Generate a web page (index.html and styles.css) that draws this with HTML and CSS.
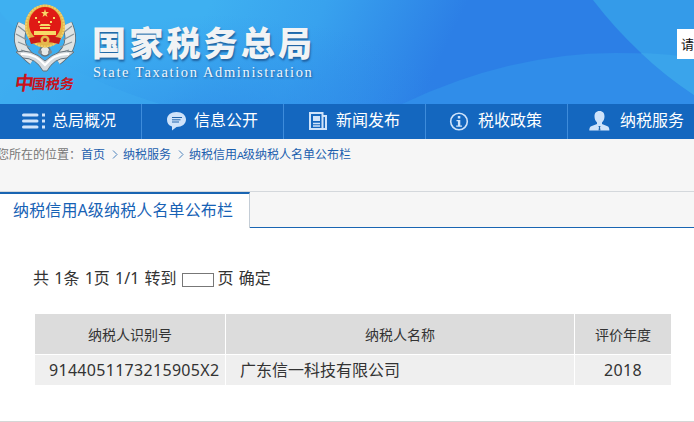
FILE: index.html
```html
<!DOCTYPE html>
<html lang="zh-CN">
<head>
<meta charset="utf-8">
<title>国家税务总局</title>
<link rel="stylesheet" href="styles.css">
</head>
<body>
<header class="banner">
  <svg class="banner-bg" viewBox="0 0 694 104" preserveAspectRatio="none" aria-hidden="true">
    <defs>
      <linearGradient id="sky" gradientUnits="userSpaceOnUse" x1="230" y1="-40" x2="440" y2="60">
        <stop offset="0" stop-color="#3eb0f1"/><stop offset=".45" stop-color="#38a2ee"/><stop offset="1" stop-color="#2c7fe6"/>
      </linearGradient>
      <radialGradient id="glow" gradientUnits="userSpaceOnUse" cx="0" cy="0" r="1" gradientTransform="translate(220 125) scale(240 110)">
        <stop offset="0" stop-color="#2d8be8" stop-opacity=".75"/><stop offset="1" stop-color="#2d8be8" stop-opacity="0"/>
      </radialGradient>
    </defs>
    <path fill="url(#sky)" d="M0 0H694V104H0z"/>
    <path fill="url(#glow)" d="M0 0H694V104H0z"/>
    <path fill="#3dabf0" opacity=".45" d="M0 12Q50 70 160 104H0z"/>
    <path fill="#308de9" d="M402 104Q510 53 615 53Q660 53 694 58V104z"/>
    <path fill="#349be9" d="M593 0Q635 55 694 95V0z"/>
    <path fill="#3aa4eb" d="M641 53Q670 54 694 58V95Q665 76 641 53z"/>
  </svg>
  <div class="emblem">
    <svg width="64" height="68" viewBox="0 0 64 68" aria-hidden="true">
      <path d="M10 20Q0 42 20 56M54 20Q64 42 44 56" fill="none" stroke="#59666f" stroke-width="11"/>
      <path d="M10 20Q0 42 20 56M54 20Q64 42 44 56" fill="none" stroke="#dfe3e3" stroke-width="9.500"/>
      <path d="M5 22l9 7M3 30l11 6M5 38l12 5M8 46l12 4M59 22l-9 7M61 30l-11 6M59 38l-12 5M56 46l-12 4" stroke="#89949a" stroke-width="1.300"/>
      <path d="M3 48Q18 44 32 57Q46 44 61 48L54 54Q41 54 34 67H30Q23 54 10 54z" fill="#d5dbdf" stroke="#65727b"/>
      <path d="M8 50Q22 49 32 61Q42 49 56 50" fill="none" stroke="#fff" stroke-width="2"/>
      <circle cx="32" cy="47" r="5" fill="#e6e9e7" stroke="#68737a" stroke-width="1.500"/>
      <circle cx="27" cy="48" r="2" fill="#7f8a90"/><circle cx="37" cy="48" r="2" fill="#7f8a90"/>
      <ellipse cx="32" cy="22" rx="20" ry="21.500" fill="#e3b649"/>
      <ellipse cx="32" cy="22" rx="19" ry="20.500" fill="none" stroke="#f0cf6c" stroke-width="2" stroke-dasharray="2 1"/>
      <ellipse cx="32" cy="20" rx="16" ry="17" fill="#e01a15"/>
      <path fill="#f7d968" d="m32 5 1 3h3l-2.500 2 1 3-2.500-1.800-2.500 1.800 1-3-2.500-2h3zM22 13h2v2h-2zM40 13h2v2h-2zM25 17h2v2h-2zM37 17h2v2h-2zM26 22l2-2h8l2 2zM27 23h10v2H27zM21 27h22v4H21z"/>
      <path d="M16 34Q32 30 48 34L46 40Q32 36 18 40z" fill="#ca1d18"/>
      <circle cx="32" cy="36" r="4.500" fill="#e4b94d"/><circle cx="32" cy="36" r="2" fill="#bd2217"/>
    </svg>
    <div class="emblem-text"><span>中</span><span>国</span><span>税</span><span>务</span></div>
  </div>
  <div class="brand">
    <div class="brand-cn">国家税务总局</div>
    <div class="brand-en">State Taxation Administration</div>
  </div>
  <div class="search">请</div>
</header>

<nav class="nav">
  <a class="nav-item"><svg class="nav-icon" width="24" height="20" viewBox="0 0 24 20"><path d="M1.500 4H15M1.500 10H15M1.500 16H15" stroke="#cfe3fa" stroke-width="3" stroke-linecap="round"/><path fill="#cfe3fa" d="M20 2.500h3v3h-3zM20 8.500h3v3h-3zM20 14.500h3v3h-3z"/></svg>总局概况</a>
  <a class="nav-item"><svg class="nav-icon" width="24" height="20" viewBox="0 0 24 20"><path fill="#cfe3fa" d="M12.500 1C18 1 22 4 22 8.500S18 16 12.500 16L8 19.500V15.500C4.500 14.500 3 12 3 8.500 3 4 7 1 12.500 1z"/><path d="M8 6.500h10M8 8.800h8.500M8 11h7" stroke="#2265ab"/></svg>信息公开</a>
  <a class="nav-item"><svg class="nav-icon" width="24" height="20" viewBox="0 0 24 20"><path d="M4 2h12.500v16H4zM16.500 5H20v13H4" fill="none" stroke="#cfe3fa" stroke-width="2"/><path d="M7 5h7v5H7z" fill="#cfe3fa"/><path d="M7 12.500h7M7 15h7" stroke="#cfe3fa" stroke-width="1.500"/></svg>新闻发布</a>
  <a class="nav-item"><svg class="nav-icon" width="24" height="20" viewBox="0 0 24 20"><circle cx="11" cy="10.500" r="8.300" fill="none" stroke="#cfe3fa" stroke-width="1.600"/><path d="M9.800 5h2.500v2.500H9.800zM8.500 9h3.800v5.500H14v1.300H8.200v-1.300h1.700v-4.200H8.500z" fill="#cfe3fa"/></svg>税收政策</a>
  <a class="nav-item"><svg class="nav-icon nav-icon-person" width="24" height="20" viewBox="0 0 24 20"><path fill="#cfe3fa" d="M11.500 0C15 0 16.500 2.300 16.500 5.500c0 2.500-1 4.500-2.500 6V13l5.500 2.200c1.300.5 1.900 2 1.900 4.300H1.300c0-2.300.6-3.800 1.900-4.300L9 13v-1.500c-1.500-1.500-2.500-3.500-2.500-6C6.500 2.300 8 0 11.500 0z"/><path d="M10.300 15h2.400l-.7 1.200.5 3.300h-2l.5-3.300z" fill="#2469ae"/></svg>纳税服务</a>
</nav>

<div class="crumbs">
  <span class="crumb-label">您所在的位置：</span><a>首页</a><svg class="chev" width="6" height="9" viewBox="0 0 6 9"><path d="m1 .5 4 4-4 4"/></svg><a>纳税服务</a><svg class="chev" width="6" height="9" viewBox="0 0 6 9"><path d="m1 .5 4 4-4 4"/></svg><a>纳税信用<span class="narrow">A</span>级纳税人名单公布栏</a>
</div>

<div class="tabs"><h2 class="tab">纳税信用A级纳税人名单公布栏</h2><div class="tab-rest"></div></div>

<main class="content">
  <div class="pager"><span>共 1条 1页 1/1 转到</span><input class="page-input" type="text" aria-label="页"><span>页 确定</span></div>
  <div class="table">
    <div class="th">纳税人识别号</div><div class="th">纳税人名称</div><div class="th">评价年度</div>
    <div class="td code">9144051173215905X2</div><div class="td">广东信一科技有限公司</div><div class="td year">2018</div>
  </div>
</main>
</body>
</html>
```
FILE: styles.css
```css
* { box-sizing: border-box; }
body {
  margin: 0;
  width: 694px;
  height: 422px;
  overflow: hidden;
  display: flex;
  flex-direction: column;
  background: #fff;
  color: #333;
  font: 16px/20px "Noto Sans", "Noto Sans CJK SC", sans-serif;
}
.banner {
  position: relative;
  height: 104px;
  flex: none;
  display: flex;
  overflow: hidden;
  background: #37a0ed;
}
.banner-bg { position: absolute; inset: 0; width: 100%; height: 100%; }
.emblem { position: relative; width: 64px; margin: 4px 0 0 13px; }
.emblem svg { display: block; }
.emblem-text {
  display: flex;
  align-items: center;
  height: 24px;
  margin: -1px 0 0 2px;
  color: #c9121b;
  font: bold 14px/20px "Noto Sans CJK SC", sans-serif;
  transform: skewX(-8deg);
}
.emblem-text span { width: 14px; }
.emblem-text span:first-child { font-size: 19px; width: 17px; margin-top: -2px; }
.brand { position: relative; margin: 22px 0 0 15px; width: 240px; white-space: nowrap; }
.brand-cn {
  height: 41px;
  font: 900 34px/39px "Noto Sans CJK SC", sans-serif;
  letter-spacing: 3.2px;
  color: #f1f3f5;
  text-shadow: 1px 2px 2px rgba(20, 65, 120, .65);
}
.brand-en {
  padding-left: 1px;
  font: 14.5px/18px "Liberation Serif", serif;
  letter-spacing: 1.62px;
  color: #eef6fd;
  text-shadow: 1px 1px 2px rgba(20, 65, 120, .7);
}
.search {
  position: relative;
  width: 17px;
  height: 30px;
  margin: 29px 0 0 auto;
  padding-left: 4px;
  overflow: hidden;
  white-space: nowrap;
  background: #fff;
  color: #111;
  font: 13px/30px "Noto Sans CJK SC", sans-serif;
}
.nav { display: flex; flex: none; height: 35px; background: #1467bf; }
.nav-item {
  flex: 0 0 142px;
  display: flex;
  align-items: center;
  gap: 6px;
  padding: 0 0 2px 22px;
  border-right: 1px solid #3e8cdb;
  color: #fff;
  white-space: nowrap;
  line-height: 33px;
}
.nav-icon { flex: none; fill: none; margin-top: 1px; }
.nav-icon-person { margin: 0 2px 0 -2px; }
.crumbs {
  flex: none;
  display: flex;
  height: 52px;
  background: #f6f6f6;
  font: 12px/30px "Noto Sans CJK SC", sans-serif;
  color: #1c5fae;
  white-space: nowrap;
}
.crumb-label { color: #777; margin-left: -3px; }
.chev { margin: 11px 6px 0 7px; fill: none; stroke: #4c82bc; }
.chev + a { margin-left: -1px; }
.narrow { display: inline-block; width: 6px; font: 11.5px "Liberation Mono", monospace; }
.tabs { flex: none; display: flex; height: 37px; border-top: 1px solid #d4d8dc; }
.tab {
  width: 250px;
  margin: 0;
  padding: 0 0 0 13px;
  border-top: 2px solid #1965b2;
  border-right: 1px solid #c4cdd6;
  color: #1762b5;
  font-weight: 400;
  font-size: 16px;
  line-height: 33px;
  letter-spacing: .13px;
  white-space: nowrap;
}
.tab-rest { flex: 1; background: #f6f6f6; border-bottom: 1px solid #1965b2; }
.content { flex: none; height: 194px; padding: 39px 23px 0 35px; border-bottom: 1px solid #d6d6d6; }
.pager { display: flex; align-items: center; height: 22px; margin-left: -2px; white-space: nowrap; word-spacing: 1.1px; }
.page-input {
  width: 32px;
  height: 14px;
  margin: 4px 4px 0 5px;
  padding: 0;
  border: 1px solid #777;
  background: #fff;
}
.table {
  display: grid;
  grid-template-columns: 190px 348px 96px;
  grid-template-rows: 40px 30px;
  gap: 1px;
  margin-top: 25px;
}
.th { background: #dcdcdc; font-size: 14px; line-height: 42px; text-align: center; }
.td { background: #efefef; padding-left: 14px; line-height: 30px; white-space: nowrap; }
.code { letter-spacing: .3px; }
.year { padding: 0; text-align: center; letter-spacing: .3px; }
```
